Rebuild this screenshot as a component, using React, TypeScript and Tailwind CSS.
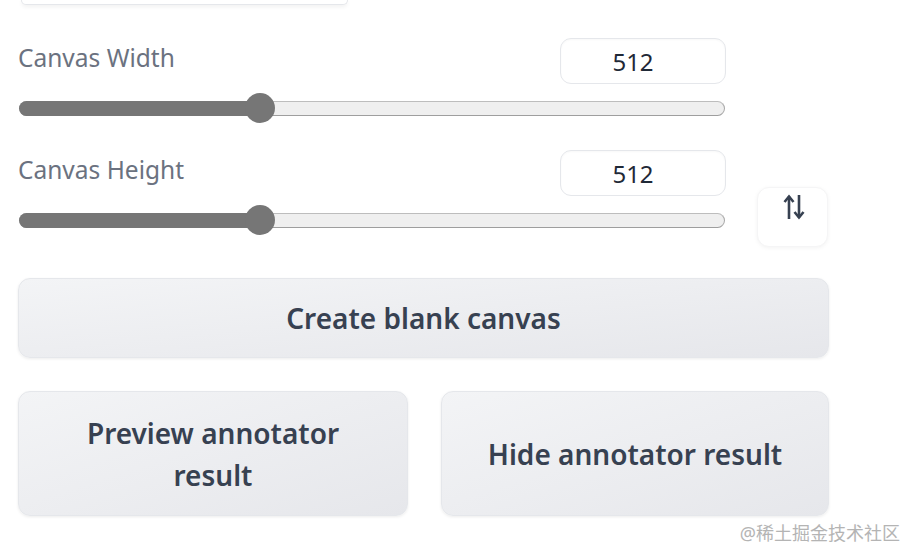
import React from "react";

const FONT = { fontFamily: '"Noto Sans", "Open Sans", sans-serif' };

function NumberBox() {
  return (
    <div className="w-[166px] h-[46px] rounded-[11px] border border-[#e5e7eb] bg-white shadow-[inset_0_1px_2px_rgba(0,0,0,0.03)] flex items-center justify-center pr-[20px] pt-[2px] text-[24px] text-[#1f2937] leading-none">
      512
    </div>
  );
}

function Slider() {
  return (
    <div className="relative h-[30px] flex items-center">
      <div className="ml-[1px] mr-[1px] w-full h-[15px] rounded-full bg-[#efefef] border border-[#bdbdbd] border-b-[#9e9e9e] border-r-[#a8a8a8]" />
      <div className="absolute left-[1px] top-[8px] h-[15px] w-[240px] rounded-l-full bg-[#767676]" />
      <div className="absolute left-[227px] top-0 w-[30px] h-[30px] rounded-full bg-[#767676]" />
    </div>
  );
}

function Field({ label }: { label: string }) {
  return (
    <div className="flex flex-col">
      <div className="flex justify-between items-start h-[46px]">
        <span className="mt-[8px] text-[24.5px] leading-none text-[#6b7280]">{label}</span>
        <NumberBox />
      </div>
      <div className="mt-[9px]">
        <Slider />
      </div>
    </div>
  );
}

function Btn({ children, className = "" }: { children: React.ReactNode; className?: string }) {
  return (
    <button
      className={
        "rounded-[12px] border border-[#e5e7eb] bg-gradient-to-br from-[#f3f4f6] to-[#e6e7eb] shadow-[0_1px_3px_rgba(0,0,0,0.08)] text-[#374151] font-semibold text-[28px] leading-[42px] flex items-center justify-center text-center " +
        className
      }
      style={FONT}
    >
      {children}
    </button>
  );
}

function SwapIcon() {
  return (
    <svg width="24" height="26" viewBox="0 0 24 26" fill="none" stroke="#374151" strokeWidth="2.6" strokeLinecap="butt" strokeLinejoin="miter">
      <path d="M7 25V2.5" />
      <path d="M2.5 8 L7 2.5 L11.5 8" />
      <path d="M17 1V23.5" />
      <path d="M12.5 18 L17 23.5 L21.5 18" />
    </svg>
  );
}

export default function App() {
  return (
    <div className="relative w-[905px] h-[548px] bg-white overflow-hidden" style={FONT}>
      <div className="ml-[21px] w-[327px] h-[5px] rounded-b-[12px] border border-t-0 border-[#e5e7eb] bg-white shadow-[0_2px_4px_rgba(0,0,0,0.06)]" />
      <div className="w-[811px] ml-[18px] mt-[33px] flex flex-col">
        <div className="w-[708px]">
          <Field label="Canvas Width" />
        </div>
        <div className="flex mt-[27px] items-start">
          <div className="w-[708px]">
            <Field label="Canvas Height" />
          </div>
          <div className="ml-[31px] mt-[37px] w-[71px] h-[60px] rounded-[12px] bg-white border border-[#f5f5f6] shadow-[0_1px_4px_rgba(0,0,0,0.05)] flex justify-center">
            <div className="mt-[6px] ml-[2px]">
              <SwapIcon />
            </div>
          </div>
        </div>
        <Btn className="mt-[31px] h-[80px] w-full">Create blank canvas</Btn>
        <div className="flex gap-[33px] mt-[33px]">
          <Btn className="w-[390px] h-[125px] px-[40px]">Preview annotator result</Btn>
          <Btn className="w-[388px] h-[125px] px-[40px]">Hide annotator result</Btn>
        </div>
      </div>
      <div
        className="absolute right-[5px] bottom-[6px] text-[18px] leading-none text-[#b4b4b4]"
        style={{ fontFamily: '"Noto Sans", "Noto Sans CJK SC", sans-serif' }}
      >
        @稀土掘金技术社区
      </div>
    </div>
  );
}
